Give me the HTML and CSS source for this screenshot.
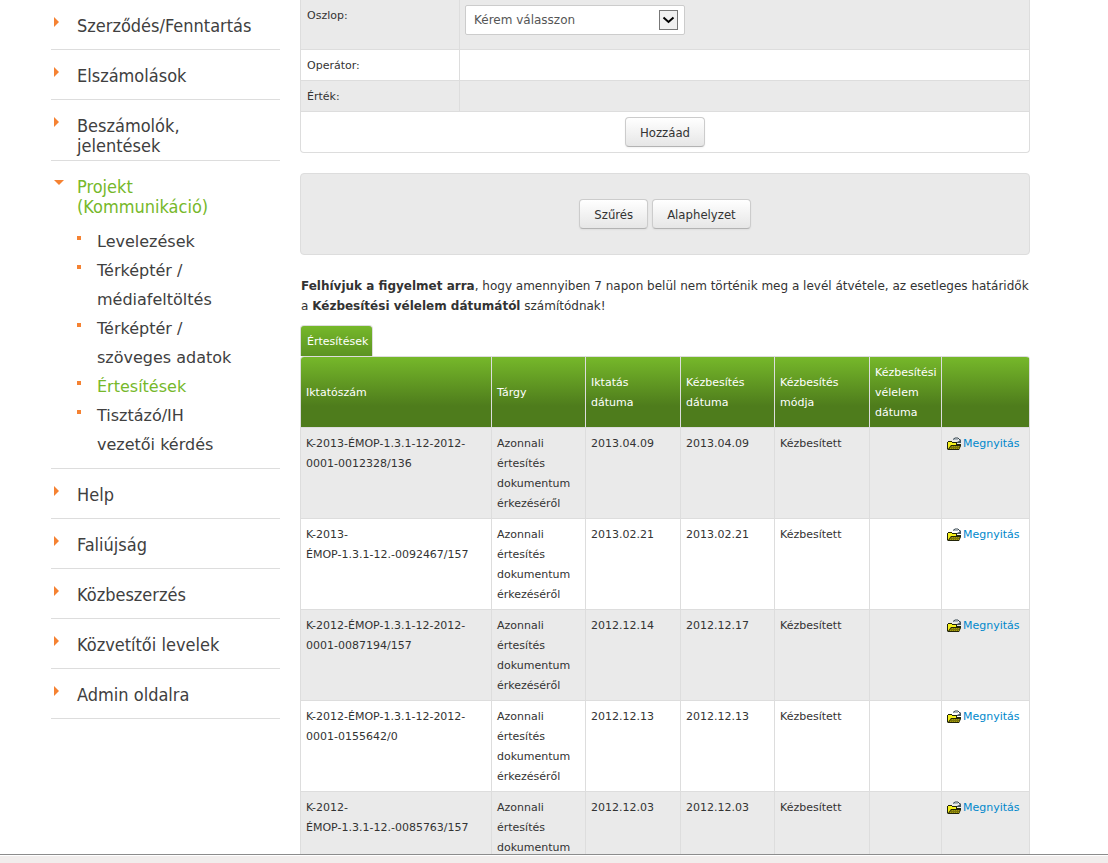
FILE: index.html
```html
<!DOCTYPE html>
<html lang="hu">
<head>
<meta charset="utf-8">
<title>Értesítések</title>
<link rel="stylesheet" href="styles.css">
</head>
<body>
<svg class="defs" aria-hidden="true">
  <symbol id="right" viewBox="0 0 10 10"><path d="M0 0L5 5L0 10Z" fill="#f58232"/></symbol>
  <symbol id="down" viewBox="0 0 10 10"><path d="M0 2H10L5 7Z" fill="#f58232"/></symbol>
  <symbol id="folder" viewBox="0 0 16 14">
    <path d="M0 5H1V4H5V5H10V7H14V9L12 13H1L0 12Z" fill="#222408"/>
    <path d="M1 5H5V6H9V8H4L1 12Z" fill="#f4f01c"/>
    <path d="M4 9H13L12 12H2Z" fill="#7c760a"/>
    <path d="M5 9.500H13M3 11.500H12" stroke="#a8a010" stroke-width="1" stroke-dasharray="1 1"/>
    <path d="M6 2.500L8 1H11L13 3" fill="none" stroke="#34444f" stroke-width="1"/>
    <path d="M7 2.500H11" stroke="#a9b5bf"/>
    <path d="M14 2V6H10V5L12 4Z" fill="#46545e"/>
  </symbol>
</svg>
<div class="viewport">
  <nav class="sidebar">
    <ul class="menu">
      <li><a class="item" href="#"><svg class="arrow"><use href="#right"/></svg><span>Szerződés/Fenntartás</span></a></li>
      <li><a class="item" href="#"><svg class="arrow"><use href="#right"/></svg><span>Elszámolások</span></a></li>
      <li><a class="item" href="#"><svg class="arrow"><use href="#right"/></svg><span>Beszámolók, jelentések</span></a></li>
      <li>
        <a class="item active" href="#"><svg class="arrow"><use href="#down"/></svg><span>Projekt (Kommunikáció)</span></a>
        <ul class="submenu">
          <li><a href="#">Levelezések</a></li>
          <li><a href="#">Térképtér / médiafeltöltés</a></li>
          <li><a href="#">Térképtér / szöveges adatok</a></li>
          <li><a class="active" href="#">Értesítések</a></li>
          <li><a href="#">Tisztázó/IH vezetői kérdés</a></li>
        </ul>
      </li>
      <li><a class="item" href="#"><svg class="arrow"><use href="#right"/></svg><span>Help</span></a></li>
      <li><a class="item" href="#"><svg class="arrow"><use href="#right"/></svg><span>Faliújság</span></a></li>
      <li><a class="item" href="#"><svg class="arrow"><use href="#right"/></svg><span>Közbeszerzés</span></a></li>
      <li><a class="item" href="#"><svg class="arrow"><use href="#right"/></svg><span>Közvetítői levelek</span></a></li>
      <li><a class="item" href="#"><svg class="arrow"><use href="#right"/></svg><span>Admin oldalra</span></a></li>
    </ul>
  </nav>
  <main class="content">
    <form class="filter">
      <div class="row shaded">
        <label class="name" for="column">Oszlop:</label>
        <div class="value">
          <div class="picker">
            <select id="column"><option>Kérem válasszon</option></select>
            <svg class="drop" viewBox="0 0 19 20" aria-hidden="true"><rect x=".5" y=".5" width="18" height="19" fill="#f0f0f0" stroke="#777"/><path d="M4.500 7.500L9.500 12L14.500 7.500" fill="none" stroke="#000" stroke-width="2"/></svg>
          </div>
        </div>
      </div>
      <div class="row"><span class="name">Operátor:</span><div class="value"></div></div>
      <div class="row shaded"><span class="name">Érték:</span><div class="value"></div></div>
      <div class="add"><button class="btn" type="button">Hozzáad</button></div>
    </form>
    <div class="actions">
      <button class="btn" type="button">Szűrés</button>
      <button class="btn" type="button">Alaphelyzet</button>
    </div>
    <p class="notice"><strong>Felhívjuk a figyelmet arra</strong>, hogy amennyiben 7 napon belül nem történik meg a levél átvétele, az esetleges határidők a <strong>Kézbesítési vélelem dátumától</strong> számítódnak!</p>
    <div class="tab">Értesítések</div>
    <table class="grid">
      <colgroup><col><col class="c-narrow"><col class="c-wide"><col class="c-narrow"><col class="c-wide"><col class="c-term"><col class="c-open"></colgroup>
      <thead>
        <tr><th>Iktatószám</th><th>Tárgy</th><th>Iktatás<br>dátuma</th><th>Kézbesítés dátuma</th><th>Kézbesítés módja</th><th>Kézbesítési vélelem dátuma</th><th></th></tr>
      </thead>
      <tbody>
        <tr><td>K-2013-ÉMOP-1.3.1-12-2012-<br>0001-0012328/136</td><td>Azonnali értesítés dokumentum érkezéséről</td><td>2013.04.09</td><td>2013.04.09</td><td>Kézbesített</td><td></td><td><a class="open" href="#"><svg class="folder"><use href="#folder"/></svg>Megnyitás</a></td></tr>
        <tr><td>K-2013-<br>ÉMOP-1.3.1-12.-0092467/157</td><td>Azonnali értesítés dokumentum érkezéséről</td><td>2013.02.21</td><td>2013.02.21</td><td>Kézbesített</td><td></td><td><a class="open" href="#"><svg class="folder"><use href="#folder"/></svg>Megnyitás</a></td></tr>
        <tr><td>K-2012-ÉMOP-1.3.1-12-2012-<br>0001-0087194/157</td><td>Azonnali értesítés dokumentum érkezéséről</td><td>2012.12.14</td><td>2012.12.17</td><td>Kézbesített</td><td></td><td><a class="open" href="#"><svg class="folder"><use href="#folder"/></svg>Megnyitás</a></td></tr>
        <tr><td>K-2012-ÉMOP-1.3.1-12-2012-<br>0001-0155642/0</td><td>Azonnali értesítés dokumentum érkezéséről</td><td>2012.12.13</td><td>2012.12.13</td><td>Kézbesített</td><td></td><td><a class="open" href="#"><svg class="folder"><use href="#folder"/></svg>Megnyitás</a></td></tr>
        <tr><td>K-2012-<br>ÉMOP-1.3.1-12.-0085763/157</td><td>Azonnali értesítés dokumentum</td><td>2012.12.03</td><td>2012.12.03</td><td>Kézbesített</td><td></td><td><a class="open" href="#"><svg class="folder"><use href="#folder"/></svg>Megnyitás</a></td></tr>
      </tbody>
    </table>
  </main>
</div>
<div class="frame-edge"></div>
</body>
</html>
```
FILE: styles.css
```css
* { box-sizing: border-box; }
body {
  margin: 0;
  height: 100vh;
  display: flex;
  flex-direction: column;
  overflow: hidden;
  background: #fff;
  color: #333;
  font: 12px/20px "DejaVu Sans", Verdana, sans-serif;
}
ul { margin: 0; padding: 0; list-style: none; }
a { text-decoration: none; }
.defs { display: none; }

.viewport {
  flex: 1;
  min-height: 0;
  overflow: hidden;
  display: flex;
  align-items: flex-start;
  gap: 20px;
  padding: 0 78px 0 51px;
}
.frame-edge { height: 9px; border-top: 1px solid #8c8c8c; background: #f1edec; box-shadow: inset 0 1px #fff; }

.sidebar { flex: 0 0 229px; }
.menu > li { border-bottom: 1px solid #ddd; }
.item {
  display: flex;
  gap: 13px;
  min-height: 49px;
  padding: 16px 20px 4px 3px;
  color: #404040;
  font: 18px/20px "DejaVu Sans Condensed", "DejaVu Sans", sans-serif;
}
.arrow { flex: none; width: 10px; height: 10px; margin-top: 1px; }
.menu .active { color: #76b82a; }
.submenu { padding: 6px 40px 9px 26px; font-size: 16px; line-height: 29px; }
.submenu li { display: flex; gap: 16px; }
.submenu li::before { content: ""; flex: none; width: 4px; height: 4px; margin-top: 9px; background: #f58232; }
.submenu a { color: #404040; }

.content { flex: 1; min-width: 0; }
.filter { border: 1px solid #ddd; border-top: 0; border-radius: 0 0 4px 4px; font-size: 11px; }
.row { display: flex; border-bottom: 1px solid #ddd; }
.shaded { background: #eaeaea; }
.name { flex: 0 0 158px; padding: 6px 4px 4px 6px; }
.value { flex: 1; padding: 5px; border-left: 1px solid #ddd; }
.picker { display: grid; width: 220px; margin-bottom: 9px; align-items: center; }
.picker select {
  grid-area: 1 / 1;
  appearance: none;
  width: 100%;
  height: 30px;
  padding: 0 8px;
  border: 1px solid #ccc;
  border-radius: 2px;
  background: #fff;
  color: #555;
  font: 12px "DejaVu Sans", sans-serif;
}
.drop { grid-area: 1 / 1; justify-self: end; width: 19px; height: 20px; margin-right: 7px; pointer-events: none; }
.add { padding: 5px; display: flex; justify-content: center; }
.btn {
  height: 30px;
  padding: 0 14px;
  border: 1px solid #ccc;
  border-bottom-color: #b3b3b3;
  border-radius: 4px;
  background: linear-gradient(#fff, #e6e6e6);
  box-shadow: 0 1px 2px rgba(0, 0, 0, .05);
  color: #333;
  font: 13px "DejaVu Sans Condensed", "DejaVu Sans", sans-serif;
}
.actions {
  display: flex;
  justify-content: center;
  gap: 4px;
  margin-top: 20px;
  padding: 25px;
  border: 1px solid #ddd;
  border-radius: 4px;
  background: #eaeaea;
}
.notice { margin: 21px 0 9px; padding-left: 1px; }
.tab {
  width: fit-content;
  padding: 6px 4px 4px 6px;
  border: 1px solid #ddd;
  border-bottom: 0;
  border-radius: 4px 4px 0 0;
  background: linear-gradient(#76b82a, #5c9322);
  color: #fff;
  font-size: 11px;
}
.grid {
  width: 100%;
  table-layout: fixed;
  border: 1px solid #ddd;
  border-width: 1px 0 0 1px;
  border-radius: 4px 4px 0 0;
  border-spacing: 0;
  overflow: hidden;
  font-size: 11px;
}
.c-narrow { width: 94px; }
.c-wide { width: 95px; }
.c-term { width: 72px; }
.c-open { width: 88px; }
.grid th, .grid td {
  padding: 6px 4px 4px 5px;
  border: solid #ddd;
  border-width: 0 1px 1px 0;
  text-align: left;
  vertical-align: top;
}
.grid tbody tr { height: 91px; }
.grid th {
  height: 71px;
  padding-right: 0;
  vertical-align: middle;
  background: linear-gradient(#76b82a, #4e7c1c 70%);
  color: #fff;
  font-weight: normal;
}
.grid tbody tr:nth-child(odd) { background: #eaeaea; }
.open { display: flex; color: #08c; }
.folder { flex: none; width: 16px; height: 14px; margin-top: 3px; }
```
